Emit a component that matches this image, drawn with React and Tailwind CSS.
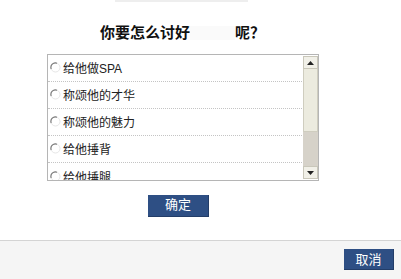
const options = ['给他做SPA', '称颂他的才华', '称颂他的魅力', '给他捶背', '给他捶腿']

const cjk = { fontFamily: '"Liberation Sans", "Noto Sans CJK SC", sans-serif' }

function Radio() {
  return (
    <svg width="11" height="11" viewBox="0 0 11 11" className="shrink-0 -mt-[3px]">
      <circle cx="5.5" cy="5.5" r="4.5" fill="white" stroke="#e6e6e6" strokeWidth="1" />
      <path d="M1.2 7 A4.5 4.5 0 0 1 7 1.2" fill="none" stroke="#777" strokeWidth="1.1" />
    </svg>
  )
}

function Arrow({ down }) {
  return (
    <svg width="7" height="4" viewBox="0 0 7 4">
      <path d={down ? 'M0 0 L7 0 L3.5 4 Z' : 'M0 4 L7 4 L3.5 0 Z'} fill="#222" />
    </svg>
  )
}

function Scrollbar() {
  return (
    <div className="w-[15px] shrink-0 flex flex-col pt-[1px]">
      <div className="h-[13px] bg-[#f1f0e8] border border-[#c9c7ba] flex items-center justify-center">
        <Arrow />
      </div>
      <div className="h-[63px] bg-[#ecebdf] border-x border-b border-[#cfcdbf]" />
      <div className="h-[34px] bg-[#d6d2c9]" />
      <div className="h-[13px] bg-[#f1f0e8] border border-[#c9c7ba] flex items-center justify-center">
        <Arrow down />
      </div>
    </div>
  )
}

export default function App() {
  return (
    <div className="w-[401px] h-[279px] bg-white flex flex-col overflow-hidden" style={cjk}>
      <div className="h-[240px] flex flex-col">
        <div className="ml-[115px] w-[133px] h-[2px] bg-[#eeeeee]" />

        <h1 className="pl-[100px] mt-[22px] text-[15px] font-bold text-[#111] leading-[18px] flex items-center">
          你要怎么讨好<span className="inline-block w-[45px] h-[14px] bg-[#fafafa]" />呢？
        </h1>

        <div className="ml-[47px] mt-[12px] w-[272px] h-[127px] border border-[#b5b5b5] flex overflow-hidden">
          <div className="flex-1 flex flex-col pr-[1px]">
            {options.map((o, i) => (
              <div
                key={o}
                className={`h-[27px] shrink-0 flex items-center gap-[2px] pl-[2px] pt-[2px] text-[12px] text-[#222] ${i < options.length - 1 ? 'border-b border-dotted border-[#c4c4c4]' : ''}`}
              >
                <Radio />
                <span>{o}</span>
              </div>
            ))}
          </div>
          <Scrollbar />
        </div>

        <div className="ml-[148px] mt-[11px]">
          <button className="w-[61px] h-[22px] bg-[#2e4f84] border-b border-r border-[#233d68] text-white text-[13px] leading-[20px]">
            确定
          </button>
        </div>
      </div>

      <div className="flex-1 bg-[#f5f5f5] border-t border-[#d4d4d4] flex justify-end pr-[7px] pt-[8px]">
        <button className="w-[50px] h-[21px] bg-[#2e4f84] border-b border-r border-[#233d68] text-white text-[13px] leading-[19px]">
          取消
        </button>
      </div>
    </div>
  )
}
